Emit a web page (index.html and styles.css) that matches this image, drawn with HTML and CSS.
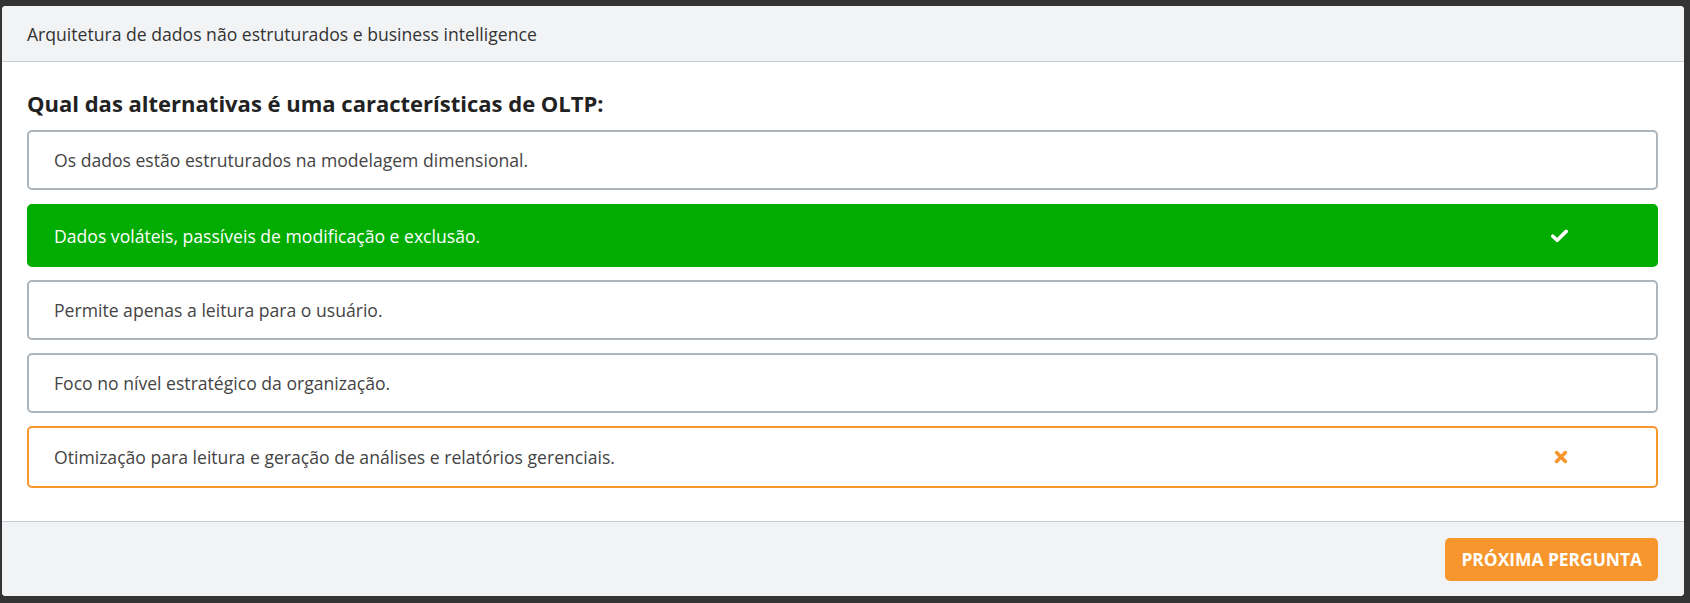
FILE: index.html
```html
<!DOCTYPE html>
<html lang="pt-BR">
<head>
<meta charset="utf-8">
<title>Quiz</title>
<link rel="stylesheet" href="styles.css">
</head>
<body>
<div class="card">
  <div class="card-header">Arquitetura de dados não estruturados e business intelligence</div>
  <div class="card-body">
    <h2 class="question">Qual das alternativas é uma características de OLTP:</h2>
    <div class="options">
      <div class="option">
        <span class="option-text">Os dados estão estruturados na modelagem dimensional.</span>
      </div>
      <div class="option option-correct">
        <span class="option-text">Dados voláteis, passíveis de modificação e exclusão.</span>
        <span class="option-icon">
          <svg width="17" height="14" viewBox="0 0 17 14"><path d="M1.8 7.2 L6.2 11.3 L15.2 2.4" fill="none" stroke="#fff" stroke-width="3.6" stroke-linecap="round" stroke-linejoin="round"/></svg>
        </span>
      </div>
      <div class="option">
        <span class="option-text">Permite apenas a leitura para o usuário.</span>
      </div>
      <div class="option">
        <span class="option-text">Foco no nível estratégico da organização.</span>
      </div>
      <div class="option option-wrong">
        <span class="option-text">Otimização para leitura e geração de análises e relatórios gerenciais.</span>
        <span class="option-icon">
          <svg width="14" height="14" viewBox="0 0 14 14"><path d="M2.6 2.6 L11.4 11.4 M11.4 2.6 L2.6 11.4" fill="none" stroke="#f7962d" stroke-width="3.6" stroke-linecap="round"/></svg>
        </span>
      </div>
    </div>
  </div>
  <div class="card-footer">
    <button class="btn-next">PRÓXIMA PERGUNTA</button>
  </div>
</div>
</body>
</html>
```

FILE: styles.css
```css
* { box-sizing: border-box; }
html, body { height: 100%; }
body {
  margin: 0;
  background: #333333;
  padding: 6px 6px 7px 2px;
  font-family: "Open Sans", "Noto Sans", "Liberation Sans", sans-serif;
  color: #444;
}
.card {
  background: #fff;
  border-radius: 4px;
  overflow: hidden;
  display: flex;
  flex-direction: column;
  height: 590px;
}
.card-header {
  height: 56px;
  background: #f2f3f5;
  border-bottom: 1px solid #c9ccd0;
  padding: 0 25px;
  display: flex;
  align-items: center;
  font-size: 17.6px;
  color: #333;
}
.card-body {
  flex: 1;
  padding: 26px 26px 0 25px;
}
.question {
  margin: 0 0 12px;
  font-size: 22px;
  line-height: 30px;
  font-weight: 700;
  color: #222;
}
.options {
  display: flex;
  flex-direction: column;
  gap: 13px;
}
.option {
  height: 60px;
  border: 2px solid #adb5bd;
  border-radius: 5px;
  display: flex;
  align-items: center;
  padding: 0 88px 0 25px;
  font-size: 17.6px;
  color: #444;
}
.option-text { flex: 1; }
.option-icon {
  display: flex;
  align-items: center;
}
.option-correct {
  background: #00ad00;
  border-color: #00ad00;
  color: #fff;
  height: 63px;
  margin-top: 1px;
}
.option-wrong {
  border-color: #f7962d;
  height: 62px;
}
.card-footer {
  height: 75px;
  background: #f2f3f5;
  border-top: 1px solid #c9ccd0;
  display: flex;
  align-items: center;
  justify-content: flex-end;
  padding: 0 26px 0 25px;
}
.btn-next {
  height: 43px;
  padding: 0 16px;
  background: #f7962d;
  border: none;
  border-radius: 5px;
  color: #fff;
  font-family: "Open Sans", "Noto Sans", sans-serif;
  font-weight: 700;
  font-size: 17.4px;
}
```
